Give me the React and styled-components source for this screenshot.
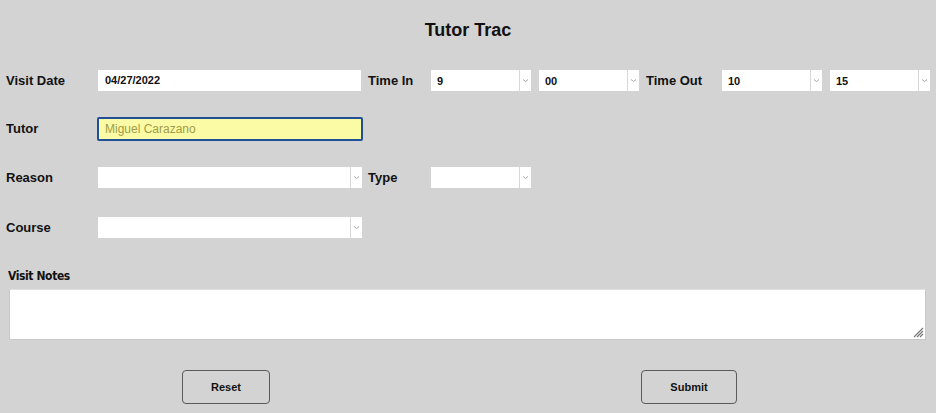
import React from "react"
import styled, { createGlobalStyle } from "styled-components"

const Global = createGlobalStyle`
  html, body {
    margin: 0;
    padding: 0;
    background: #d3d3d3;
    font-family: "Liberation Sans", Arial, sans-serif;
  }
`

const Page = styled.div`
  width: 936px;
  height: 413px;
  box-sizing: border-box;
  padding-top: 18px;
  overflow: hidden;
`

const Title = styled.h1`
  margin: 0;
  text-align: center;
  font-size: 18px;
  font-weight: bold;
  color: #111;
  line-height: 24px;
`

const Form = styled.div`
  padding-left: 6px;
`

const Row = styled.div`
  display: flex;
  align-items: flex-start;
  height: 21px;
  margin-top: ${p => p.$top}px;
`

const Label = styled.div`
  flex: none;
  width: ${p => p.$w}px;
  margin-left: ${p => p.$ml || 0}px;
  font-size: 13px;
  font-weight: bold;
  color: #111;
  line-height: 21px;
`

const TextBox = styled.div`
  box-sizing: border-box;
  flex: none;
  height: 21px;
  width: 263px;
  background: #fff;
  font-size: 11px;
  font-weight: bold;
  color: #111;
  padding-left: 7px;
  line-height: 21px;
`

const FocusBox = styled.div`
  box-sizing: border-box;
  flex: none;
  height: 24px;
  width: 266px;
  margin-left: -1px;
  margin-top: -1px;
  background: #fbfba6;
  border: 2px solid #1f4f96;
  border-radius: 2px;
  font-size: 12px;
  color: #a09b48;
  padding-left: 6px;
  line-height: 20px;
`

const SelectBox = styled.div`
  box-sizing: border-box;
  flex: none;
  display: flex;
  height: 21px;
  width: ${p => p.$w}px;
  margin-left: ${p => p.$ml || 0}px;
  background: #fff;
`

const SelectValue = styled.div`
  flex: 1;
  font-size: 11px;
  font-weight: bold;
  color: #111;
  padding-left: 6px;
  line-height: 23px;
`

const Arrow = styled.div`
  width: 11px;
  border-left: 1px solid #d8d8d8;
  display: flex;
  align-items: center;
  justify-content: center;
`

const Chevron = () => (
  <svg width="7" height="5" viewBox="0 0 7 5">
    <path d="M1 1.5 L3.5 3.5 L6 1.5" stroke="#a8a8a8" strokeWidth="1" fill="none" />
  </svg>
)

const Select = ({ value, w = 100, ml }) => (
  <SelectBox $w={w} $ml={ml}>
    <SelectValue>{value}</SelectValue>
    <Arrow><Chevron /></Arrow>
  </SelectBox>
)

const Notes = styled.div`
  padding: 0 10px 0 8px;
  margin-top: 30px;
`

const NotesLabel = styled.div`
  font-family: "DejaVu Sans Condensed", "DejaVu Sans", sans-serif;
  font-size: 12px;
  font-weight: bold;
  letter-spacing: -0.4px;
  color: #111;
  line-height: 16px;
  margin-bottom: 5px;
`

const NotesArea = styled.div`
  position: relative;
  margin-left: 1px;
  height: 49px;
  background: #fff;
  border: 1px solid #c8c8c8;
  border-top-color: #e0e0e0;
`

const Grip = styled.svg`
  position: absolute;
  right: 1px;
  bottom: 1px;
`

const Buttons = styled.div`
  display: flex;
  margin-top: 30px;
  padding-left: 182px;
  gap: 371px;
`

const Button = styled.button`
  box-sizing: border-box;
  width: ${p => p.$w}px;
  height: 34px;
  background: #d3d3d3;
  border: 1px solid #5a5a5a;
  border-radius: 4px;
  font-family: "Liberation Sans", Arial, sans-serif;
  font-size: 11px;
  font-weight: bold;
  color: #111;
  padding: 0;
`

export default function App() {
  return (
    <Page>
      <Global />
      <Title>Tutor Trac</Title>
      <Form>
        <Row $top={28}>
          <Label $w={92}>Visit Date</Label>
          <TextBox>04/27/2022</TextBox>
          <Label $w={63} $ml={7}>Time In</Label>
          <Select value="9" />
          <Select value="00" ml={8} />
          <Label $w={76} $ml={7}>Time Out</Label>
          <Select value="10" />
          <Select value="15" ml={8} />
        </Row>
        <Row $top={27}>
          <Label $w={92}>Tutor</Label>
          <FocusBox>Miguel Carazano</FocusBox>
        </Row>
        <Row $top={28}>
          <Label $w={92}>Reason</Label>
          <Select value="" w={264} />
          <Label $w={63} $ml={6}>Type</Label>
          <Select value="" />
        </Row>
        <Row $top={29}>
          <Label $w={92}>Course</Label>
          <Select value="" w={264} />
        </Row>
      </Form>
      <Notes>
        <NotesLabel>Visit Notes</NotesLabel>
        <NotesArea>
          <Grip width="12" height="12" viewBox="0 0 12 12">
            <path d="M11 2 L2 11 M11 5 L5 11 M11 8 L8 11" stroke="#777" strokeWidth="1.2" fill="none" />
          </Grip>
        </NotesArea>
      </Notes>
      <Buttons>
        <Button $w={88}>Reset</Button>
        <Button $w={96}>Submit</Button>
      </Buttons>
    </Page>
  )
}
